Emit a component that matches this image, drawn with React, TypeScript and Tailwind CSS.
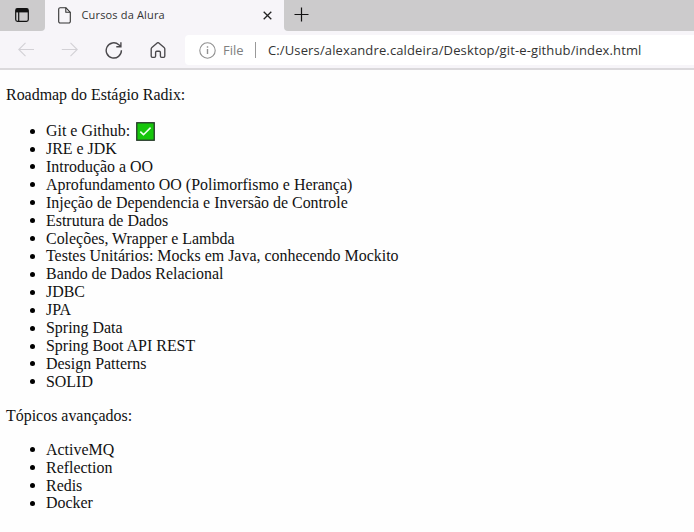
const roadmap = [
  "Git e Github:",
  "JRE e JDK",
  "Introdução a OO",
  "Aprofundamento OO (Polimorfismo e Herança)",
  "Injeção de Dependencia e Inversão de Controle",
  "Estrutura de Dados",
  "Coleções, Wrapper e Lambda",
  "Testes Unitários: Mocks em Java, conhecendo Mockito",
  "Bando de Dados Relacional",
  "JDBC",
  "JPA",
  "Spring Data",
  "Spring Boot API REST",
  "Design Patterns",
  "SOLID",
];

const advanced = ["ActiveMQ", "Reflection", "Redis", "Docker"];

function CheckMark() {
  return (
    <svg className="ml-[6px] h-[19px] w-[19px] shrink-0" viewBox="0 0 19 19" fill="none">
      <rect x="0.75" y="0.75" width="17.5" height="17.5" fill="#16c60c" stroke="#26382a" strokeWidth="1.3" />
      <path d="M4.3 9.7 7.5 12.7 14.6 5.6" stroke="#effff0" strokeWidth="1.6" />
    </svg>
  );
}

function TopicList({ items, done = [] }: { items: string[]; done?: number[] }) {
  return (
    <ul>
      {items.map((item, i) => (
        <li key={item} className="flex h-[17.92px] items-center pl-[30px] leading-[18px]">
          <span className="mr-[11px] h-[5px] w-[5px] shrink-0 rounded-full bg-black" />
          <span className="whitespace-nowrap">{item}</span>
          {done.includes(i) && <CheckMark />}
        </li>
      ))}
    </ul>
  );
}

function TabBar() {
  return (
    <div className="flex h-[31px] bg-[#f7f5f9]">
      <div className="flex w-[45px] rounded-br-[4px] bg-[#cccbcc] pl-[15px] pt-[8px]">
        <svg className="h-[14px] w-[14px]" viewBox="0 0 14 14" fill="none" stroke="#111" strokeWidth="1.2">
          <rect x="0.7" y="0.7" width="12.6" height="12.6" rx="1.8" />
          <path d="M1 2.6h12" strokeWidth="3.6" />
          <path d="M3.7 3v10" />
        </svg>
      </div>
      <div className="flex w-[239px] pl-[13px]">
        <svg className="mt-[7px] h-[17px] w-[13px]" viewBox="0 0 13 17" fill="none" stroke="#333" strokeWidth="1.1" strokeLinejoin="round">
          <path d="M2.2.7h5.6l4.5 4.6v9.2a1.5 1.5 0 0 1-1.5 1.5H2.2A1.5 1.5 0 0 1 .7 14.5V2.2A1.5 1.5 0 0 1 2.2.7Z" />
          <path d="M7.8.7v4.6h4.5" />
        </svg>
        <span className="ml-[10.5px] mt-[7px] w-[181px] whitespace-nowrap font-['Open_Sans','Noto_Sans',sans-serif] text-[11px] leading-4 tracking-[0.16px] text-[#333]">
          Cursos da Alura
        </span>
        <svg className="mt-[11px] h-[9px] w-[9px] shrink-0" viewBox="0 0 9 9" stroke="#222" strokeWidth="1.3">
          <path d="m.7.7 7.6 7.6M8.3.7.7 8.3" />
        </svg>
      </div>
      <div className="flex flex-1 rounded-bl-[4px] bg-[#cccbcc] pl-[10px] pt-[7px]">
        <svg className="h-[15px] w-[15px]" viewBox="0 0 15 15" stroke="#111" strokeWidth="1.2">
          <path d="M7.5.5v14M.5 7.5h14" />
        </svg>
      </div>
    </div>
  );
}

function AddressBar() {
  return (
    <div className="flex h-[39px] border-b-2 border-[#dbd9dc] bg-[#f7f5f9]">
      <div className="flex w-[185px] pt-[10px]">
        <svg className="ml-[18px] h-[17px] w-[17px]" viewBox="0 0 17 17" fill="none" stroke="#d3d1d6" strokeWidth="1.1">
          <path d="M16 8.5H.8M7.5 1.8.8 8.5l6.7 6.7" />
        </svg>
        <svg className="ml-[26px] h-[17px] w-[17px]" viewBox="0 0 17 17" fill="none" stroke="#d3d1d6" strokeWidth="1.1">
          <path d="M.8 8.5h15.4M9.5 1.8l6.7 6.7-6.7 6.7" />
        </svg>
        <svg className="ml-[27px] h-[18px] w-[18px]" viewBox="0 0 18 18" fill="none" stroke="#4a484c" strokeWidth="1.4">
          <path d="M16.4 9.3A7.6 7.6 0 1 1 13.8 3.7l1.8 1.6M15.9 1.2v4.6h-4.6" />
        </svg>
        <svg className="ml-[27px] h-[18px] w-[16px]" viewBox="0 0 16 18" fill="none" stroke="#4a484c" strokeWidth="1.35" strokeLinejoin="round">
          <path d="M1.2 7.9q0-.9.7-1.5L7.2 1.9q.8-.6 1.6 0l5.3 4.5q.7.6.7 1.5v7.2q0 1.2-1.2 1.2h-2q-1.2 0-1.2-1.2v-3.6q0-1.3-1.2-1.3H6.8q-1.2 0-1.2 1.3v3.6q0 1.2-1.2 1.2h-2q-1.2 0-1.2-1.2Z" />
        </svg>
      </div>
      <div className="mt-[4px] flex h-[30px] flex-1 items-center whitespace-nowrap rounded-l-[4px] bg-white pl-[14px] font-['Open_Sans','Noto_Sans',sans-serif] text-[13px] leading-[18px]">
        <svg className="h-[17px] w-[17px]" viewBox="0 0 17 17" fill="none" stroke="#919191" strokeWidth="1.1">
          <circle cx="8.5" cy="8.5" r="7.7" />
          <path d="M8.5 7v5M8.5 4.3v1.5" strokeWidth="1.4" />
        </svg>
        <span className="ml-[7px] w-[22px] text-[13px] text-[#808080]">File</span>
        <span className="ml-[10px] h-[16px] w-px bg-[#999]" />
        <span className="ml-[12px] tracking-[0.13px] text-[#333]">C:/Users/alexandre.caldeira/Desktop/git-e-github/index.html</span>
      </div>
    </div>
  );
}

export default function App() {
  return (
    <div className="h-[532px] w-[694px] overflow-hidden bg-[#fefefe]">
      <TabBar />
      <AddressBar />
      <main className="font-['Liberation_Serif','Times_New_Roman',serif] text-[15.95px] text-[#111]">
        <p className="pl-[6px] pt-[16px] leading-[18px]">Roadmap do Estágio Radix:</p>
        <div className="pt-[18.2px]">
          <TopicList items={roadmap} done={[0]} />
        </div>
        <p className="pl-[6px] pt-[16px] leading-[18px]">Tópicos avançados:</p>
        <div className="pt-[16px]">
          <TopicList items={advanced} />
        </div>
      </main>
    </div>
  );
}
